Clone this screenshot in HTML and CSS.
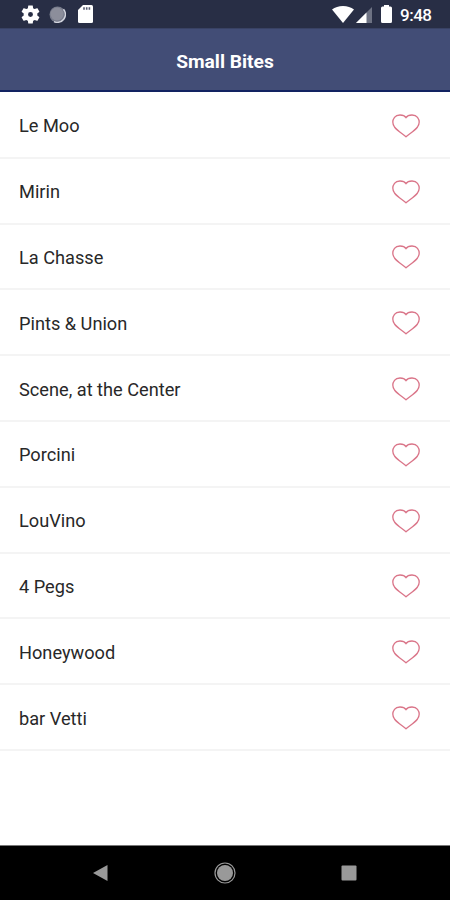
FILE: index.html
```html
<!DOCTYPE html>
<html lang="en">
<head>
<meta charset="utf-8">
<title>Small Bites</title>
<link rel="stylesheet" href="styles.css">
</head>
<body>
<svg class="defs" width="0" height="0">
  <symbol id="heart" viewBox="0 0 28 24">
    <path d="M14 22.800C10 19.500 5 16.500 2.500 13 .5 10 .5 6 2.500 3.300 4 1.300 5.500 1 8 1c2.500 0 4.500.200 6 2.600C15.500 1.200 17.500 1 20 1s4 .300 5.500 2.300c2 2.700 2 6.700 0 9.700-2.500 3.500-7.500 6.500-11.500 9.800z"/>
  </symbol>
</svg>
<div class="status">
  <svg class="gear" viewBox="2 2 20 20"><path fill="#fff" fill-rule="evenodd" d="M19.140 12.940c.040-.300.060-.610.060-.940 0-.320-.020-.640-.070-.940l2.030-1.580c.180-.140.230-.410.120-.610l-1.920-3.320c-.120-.220-.370-.290-.590-.220l-2.390.960c-.500-.380-1.030-.700-1.620-.940l-.360-2.540c-.040-.240-.240-.410-.480-.410h-3.840c-.240 0-.430.170-.470.410l-.360 2.540c-.590.240-1.130.570-1.620.940l-2.390-.960c-.220-.080-.470 0-.590.220L2.740 8.870c-.120.210-.080.470.120.610l2.030 1.580c-.050.300-.090.630-.090.940s.020.640.070.940l-2.030 1.580c-.180.140-.230.410-.120.610l1.920 3.320c.120.220.370.290.590.220l2.390-.960c.500.380 1.030.700 1.620.940l.360 2.540c.050.240.240.410.480.410h3.840c.240 0 .440-.170.470-.410l.360-2.540c.590-.240 1.130-.560 1.620-.940l2.390.960c.220.080.470 0 .590-.220l1.920-3.320c.120-.220.070-.470-.120-.610l-2.010-1.580zM12 14.600a2.600 2.600 0 1 1 0-5.200 2.600 2.600 0 0 1 0 5.200z"/></svg>
  <svg class="sync" viewBox="0 0 17 17"><circle cx="8.500" cy="8.500" r="8" fill="#777b8b"/><path d="M14.500 3.200A8 8 0 0 1 5 15.600" fill="none" stroke="#d3d5de" stroke-width="1.500"/><circle cx="8" cy="8" r="6.500" fill="#8c8e9b"/></svg>
  <svg class="card" viewBox="0 0 15 18"><path d="M5 0h8.500Q15 0 15 1.500v15q0 1.500-1.500 1.500h-12Q0 18 0 16.500V5z" fill="#fff"/><path d="M6 2.300v2.500M8.700 2.300v2.500M11.400 2.300v2.500" stroke="#555b70" stroke-width="1.600"/></svg>
  <span class="fill"></span>
  <svg class="wifi" viewBox="0 0 22 17"><path d="M0 3.500Q4.500 0 11 0t11 3.500L11 17z" fill="#fff"/></svg>
  <svg class="signal" viewBox="0 0 16 16"><path d="M16 0v16H0z" fill="#6d7283"/><path d="M10.500 5.500V16H0z" fill="#fff"/></svg>
  <svg class="battery" viewBox="0 0 11 18"><path d="M3 0h5v1.500h1.500Q11 1.500 11 3v13.500q0 1.500-1.500 1.500h-8Q0 18 0 16.500V3q0-1.500 1.500-1.500H3z" fill="#fff"/></svg>
  <span class="time">9:48</span>
</div>
<header class="bar">Small Bites</header>
<ul class="list">
  <li>Le Moo<svg><use href="#heart"/></svg></li>
  <li>Mirin<svg><use href="#heart"/></svg></li>
  <li>La Chasse<svg><use href="#heart"/></svg></li>
  <li>Pints &amp; Union<svg><use href="#heart"/></svg></li>
  <li>Scene, at the Center<svg><use href="#heart"/></svg></li>
  <li>Porcini<svg><use href="#heart"/></svg></li>
  <li>LouVino<svg><use href="#heart"/></svg></li>
  <li>4 Pegs<svg><use href="#heart"/></svg></li>
  <li>Honeywood<svg><use href="#heart"/></svg></li>
  <li>bar Vetti<svg><use href="#heart"/></svg></li>
</ul>
<nav class="nav">
  <svg viewBox="0 0 24 24"><path d="M4 12 18.500 4v16z"/></svg>
  <svg viewBox="0 0 24 24"><circle cx="12" cy="12" r="8"/><circle class="ring" cx="12" cy="12" r="10"/></svg>
  <svg viewBox="0 0 24 24"><rect x="4.500" y="4.500" width="15" height="15" rx="1"/></svg>
</nav>
</body>
</html>
```
FILE: styles.css
```css
* { box-sizing: border-box; }
body {
  margin: 0;
  height: 900px;
  display: flex;
  flex-direction: column;
  overflow: hidden;
  background: #fff;
  font-family: Roboto, sans-serif;
}
svg { display: block; flex: none; }
.defs { position: absolute; }
.status {
  flex: none;
  height: 28px;
  padding: 0 17px 0 21px;
  display: flex;
  align-items: center;
  background: #282e45;
  color: #fff;
}
.gear { width: 19px; height: 19px; }
.sync { width: 17px; height: 17px; margin-left: 9px; }
.card { width: 15px; height: 18px; margin-left: 12px; }
.fill { flex: 1; }
.wifi { width: 22px; height: 17px; }
.signal { width: 16px; height: 16px; margin: 2px 9px 0 2px; }
.battery { width: 11px; height: 18px; margin-right: 8px; }
.time { width: 33px; font-size: 17px; font-weight: 500; line-height: 28px; padding-top: 1px; white-space: nowrap; letter-spacing: -0.5px; }
.bar {
  flex: none;
  height: 64px;
  border-top: 1px solid #394264;
  border-bottom: 2px solid #122361;
  background: #424d76;
  color: #fff;
  text-align: center;
  font-size: 19.2px;
  font-weight: 700;
  line-height: 65px;
}
.list { flex: 1; margin: 0; padding: 1px 0 0; list-style: none; }
.list li {
  height: 65.8px;
  padding: 2px 30px 0 19px;
  display: flex;
  align-items: center;
  justify-content: space-between;
  border-bottom: 2px solid #f4f4f4;
  color: #282828;
  font-size: 18.2px;
}
.list svg { width: 28px; height: 24px; fill: none; stroke: #da7589; stroke-width: 1.3; }
.nav {
  flex: none;
  height: 55px;
  border-top: 1px solid #777;
  padding: 0 89px;
  display: flex;
  align-items: center;
  justify-content: space-between;
  background: #000;
}
.nav svg { width: 24px; height: 24px; fill: #999; }
.nav .ring { fill: none; stroke: #999; stroke-width: 1.2; }
```
